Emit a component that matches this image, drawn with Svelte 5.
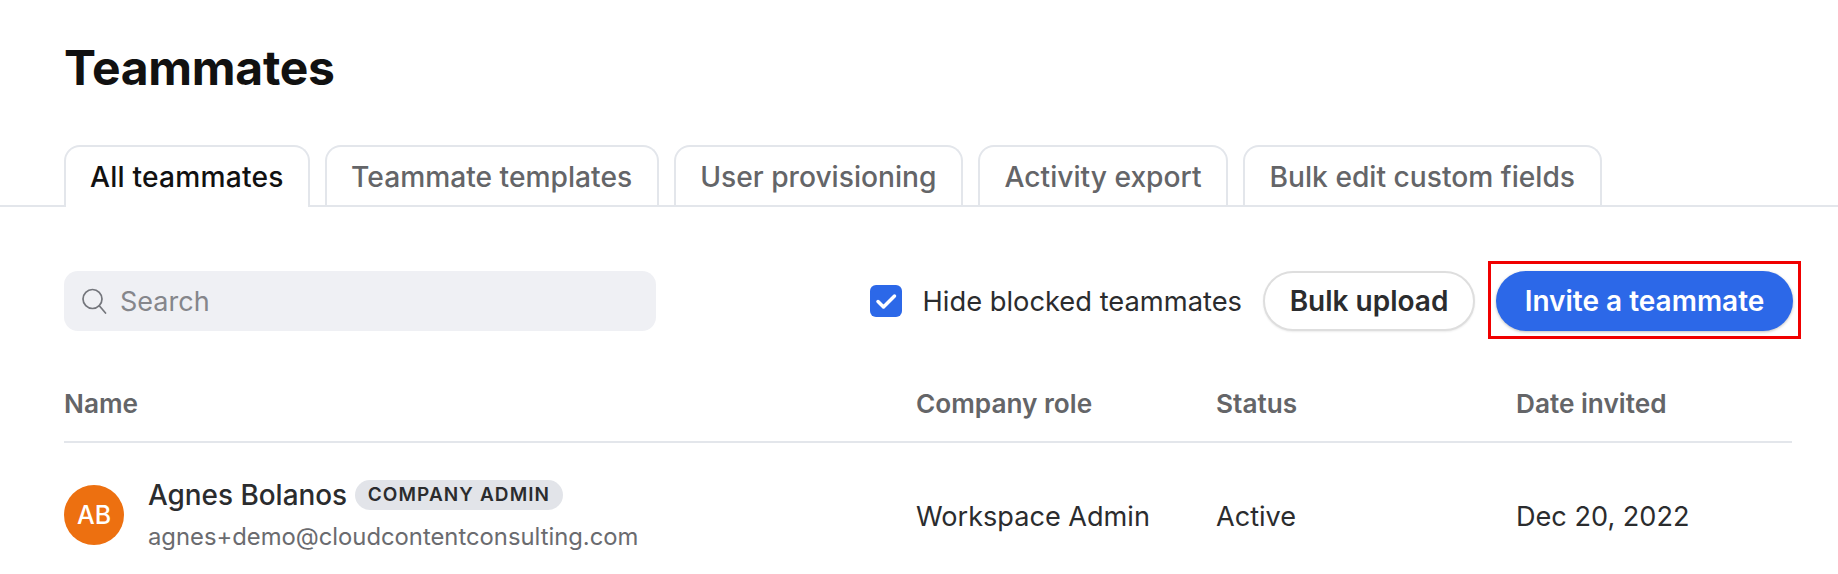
<script>
	const tabs = ['All teammates', 'Teammate templates', 'User provisioning', 'Activity export', 'Bulk edit custom fields'];
</script>

<div class="page">
	<h1>Teammates</h1>

	<div class="tabs">
		{#each tabs as tab, i}
			<div class="tab" class:active={i === 0}>{tab}</div>
		{/each}
	</div>

	<div class="toolbar">
		<div class="search">
			<svg width="26" height="26" viewBox="0 0 26 26" fill="none" stroke="#74767c" stroke-width="1.7" stroke-linecap="round">
				<circle cx="11.5" cy="11" r="9.5" />
				<path d="M18.5 18l6 7" />
			</svg>
			<span>Search</span>
		</div>
		<label class="hide">
			<span class="check">
				<svg width="32" height="32" viewBox="0 0 32 32" fill="none" stroke="#fff" stroke-width="3.5" stroke-linecap="round" stroke-linejoin="round">
					<path d="M8 16.5l5.5 5.5 11-11" />
				</svg>
			</span>
			Hide blocked teammates
		</label>
		<button class="btn secondary">Bulk upload</button>
		<div class="highlight">
			<button class="btn primary">Invite a teammate</button>
		</div>
	</div>

	<div class="row head">
		<div>Name</div>
		<div>Company role</div>
		<div>Status</div>
		<div>Date invited</div>
	</div>

	<div class="row user">
		<div class="person">
			<div class="avatar">AB</div>
			<div class="info">
				<div class="name">Agnes Bolanos <span class="badge">COMPANY ADMIN</span></div>
				<div class="email">agnes+demo@cloudcontentconsulting.com</div>
			</div>
		</div>
		<div class="cell">Workspace Admin</div>
		<div class="cell">Active</div>
		<div class="cell">Dec 20, 2022</div>
	</div>
</div>

<style>
	:global(body) {
		background: #fff;
	}

	.page {
		height: 574px;
		overflow: hidden;
		box-sizing: border-box;
		font-family: Inter, "Liberation Sans", sans-serif;
		color: #2b2c2e;
	}

	h1 {
		margin: 0;
		padding: 43px 0 0 64px;
		height: 145px;
		box-sizing: border-box;
		font-size: 48px;
		line-height: 50px;
		font-weight: 700;
		letter-spacing: -0.3px;
		color: #111;
	}

	.tabs {
		display: flex;
		align-items: flex-start;
		gap: 15px;
		padding-left: 64px;
		height: 62px;
		box-sizing: border-box;
		border-bottom: 2px solid #e3e6eb;
	}

	.tab {
		height: 60px;
		box-sizing: border-box;
		padding: 0 24.5px;
		border: 2px solid #e3e6eb;
		border-bottom: none;
		border-radius: 16px 16px 0 0;
		font-size: 28.2px;
		line-height: 60px;
		font-weight: 500;
		color: #646568;
		white-space: nowrap;
		background: #fff;
	}

	.tab.active {
		color: #111;
		height: 62px;
		padding: 0 24px;
		letter-spacing: 0.2px;
	}

	.toolbar {
		display: flex;
		align-items: center;
		padding: 64px 45px 0 64px;
		height: 60px;
		box-sizing: content-box;
	}

	.search {
		width: 592px;
		height: 60px;
		box-sizing: border-box;
		padding-left: 17px;
		display: flex;
		align-items: center;
		gap: 13px;
		background: #eff0f4;
		border-radius: 14px;
		font-size: 27px;
		color: #85868b;
		margin-right: auto;
	}

	.hide {
		display: flex;
		align-items: center;
		gap: 21px;
		font-size: 27.3px;
		color: #2b2c2e;
		margin-right: 21px;
	}

	.check {
		width: 32px;
		height: 32px;
		border-radius: 6px;
		background: #2c68e8;
		display: flex;
		align-items: center;
		justify-content: center;
	}

	.btn {
		height: 60px;
		border-radius: 30px;
		font-family: inherit;
		font-size: 28px;
		font-weight: 600;
		cursor: pointer;
		white-space: nowrap;
		padding: 0;
	}

	.secondary {
		width: 212px;
		background: #fff;
		color: #2b2c2e;
		border: 2px solid #dedede;
		box-shadow: 0 1px 2px rgba(0, 0, 0, 0.08);
	}

	/* red annotation box around the invite button */
	.highlight {
		margin: -10px -8px -8px 13px;
		padding: 7px 5px 5px;
		border: 3px solid #f00000;
	}

	.primary {
		display: block;
		width: 297px;
		background: #2c68e8;
		color: #fff;
		border: none;
		box-shadow: 0 1px 3px rgba(0, 0, 0, 0.25);
	}

	.row {
		display: grid;
		grid-template-columns: 852px 300px 300px 275px;
		margin: 0 46px 0 64px;
		align-items: center;
		font-size: 27.1px;
	}

	.head {
		margin-top: 53px;
		height: 59px;
		padding-bottom: 18px;
		box-sizing: border-box;
		border-bottom: 2px solid #e3e6eb;
		font-size: 26.2px;
		font-weight: 600;
		color: #646568;
	}

	.user {
		margin-top: 35px;
	}

	.cell {
		padding-top: 2px;
	}

	.person {
		display: flex;
		align-items: center;
		gap: 24px;
	}

	.avatar {
		width: 60px;
		height: 60px;
		border-radius: 50%;
		background: #ed7010;
		color: #fff;
		font-size: 25px;
		font-weight: 500;
		display: flex;
		align-items: center;
		justify-content: center;
	}

	.name {
		display: flex;
		align-items: center;
		gap: 8px;
		font-size: 27.9px;
		font-weight: 500;
		line-height: 34px;
	}

	.badge {
		background: #e2e4e9;
		border-radius: 15px;
		padding: 0 12.5px;
		font-size: 19px;
		line-height: 30px;
		font-weight: 600;
		letter-spacing: 1.1px;
	}

	.email {
		font-size: 23.8px;
		line-height: 30px;
		margin-top: 10px;
		color: #6a6b6f;
	}
</style>
